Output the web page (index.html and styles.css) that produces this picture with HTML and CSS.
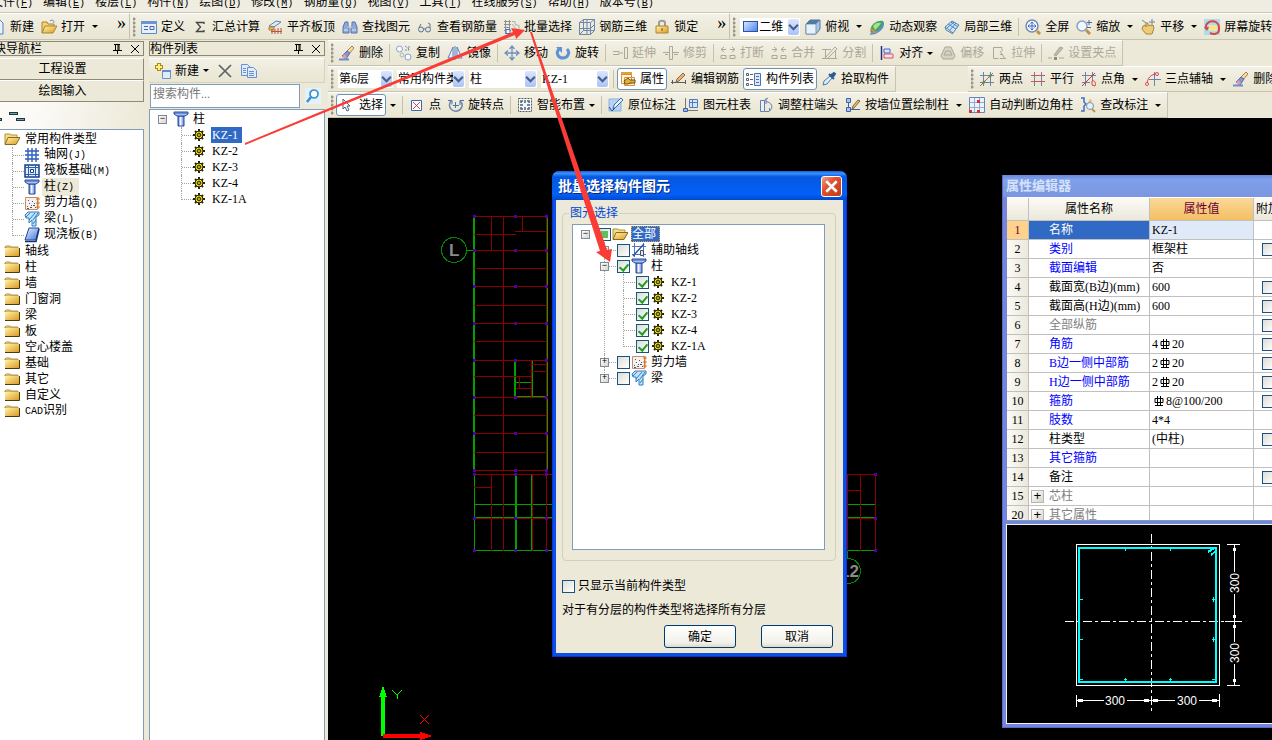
FILE: index.html
```
<!DOCTYPE html>
<html lang="zh-CN">
<head>
    <meta charset="UTF-8">
    <meta name="viewport" content="width=device-width, initial-scale=1.0">
    <title>批量选择构件图元</title>
    <link rel="stylesheet" href="styles.css">
</head>
<body>
    <!-- icon sprite -->
    <svg class="sprite" aria-hidden="true">
        <defs>
            <linearGradient id="gold" x1="0" y1="0" x2="1" y2="1"><stop offset="0" stop-color="#fff3b0"/><stop offset="1" stop-color="#dc9a1c"/></linearGradient>
            <linearGradient id="blue" x1="0" y1="0" x2="1" y2="1"><stop offset="0" stop-color="#eaf2ff"/><stop offset="1" stop-color="#3d76d8"/></linearGradient>
            <linearGradient id="steel" x1="0" y1="0" x2="1" y2="0"><stop offset="0" stop-color="#3c62c8"/><stop offset=".4" stop-color="#f4f8ff"/><stop offset="1" stop-color="#5a82dc"/></linearGradient>
        </defs>
        <symbol id="page" viewBox="0 0 16 16"><path d="M3 1h7l3 3v11H3z" fill="#e8f0fc" stroke="#5b7fc0"/></symbol>
        <symbol id="open" viewBox="0 0 16 16"><path d="M1 14V3h5l1 2h6v3" fill="#f3d372" stroke="#a88530"/><path d="M1 14l3-7h12l-4 7z" fill="url(#gold)" stroke="#a88530"/><path d="M9 2c3-2 4 0 4 2" fill="none" stroke="#5a86c8"/></symbol>
        <symbol id="folder" viewBox="0 0 16 16"><path d="M1 4l1-1h4l1 1h7v1H1z" fill="#f8dc82" stroke="#b5913a"/><path d="M1 5h14v8H1z" fill="url(#gold)"/><path d="M1 13.5h14.500V5" fill="none" stroke="#4a3a10"/></symbol>
        <symbol id="folder-open" viewBox="0 0 16 16"><path d="M1 13V3h5l1 1h6v3" fill="#f8dc82" stroke="#b5913a"/><path d="M1 13.500l3-7h12l-4 7z" fill="url(#gold)" stroke="#8a6a20"/></symbol>
        <symbol id="form" viewBox="0 0 16 16"><path d="M0 2.500h15.500v12H.500z" fill="#e6effc" stroke="#5f86c6"/><path d="M0 2h16v3H0z" fill="#6b93d6"/><path d="M3 7.500h4M3 10.500h4M9 7.500h4v3H9z" fill="none" stroke="#46689f"/></symbol>
        <symbol id="sum" viewBox="0 0 16 16"><path d="M12 5V3.500H4.500l4 4.500-4 4.500H12V11" fill="none" stroke="#444" stroke-width="1.300"/></symbol>
        <symbol id="level" viewBox="0 0 16 16"><path d="M2 7l7-5 5 1-7 5z" fill="#dce8fa" stroke="#5d7fb8"/><path d="M2 8h5v3H2z" fill="#e9bd60" stroke="#b08030"/><path d="M5 15v-5M8 15v-5M11 15V9M14 15V9M4 12.500h11" stroke="#c05040"/></symbol>
        <symbol id="find" viewBox="0 0 16 16"><path d="M3 3h3v3l1 2v6H1V8zM10 3h3l2 5v6H9V8l1-2z" fill="#8eabd8" stroke="#5674ac"/><path d="M6 8h4M2 11h4M10 11h4" stroke="#dce8fa"/></symbol>
        <symbol id="glasses" viewBox="0 0 16 16"><circle cx="4" cy="10.500" r="2.500" fill="#dce6ee" stroke="#65747e"/><circle cx="11" cy="10.500" r="2.500" fill="#dce6ee" stroke="#65747e"/><path d="M6 10h3M13 9V5l-2-1M2 9l2-4" fill="none" stroke="#65747e"/></symbol>
        <symbol id="batch" viewBox="0 0 16 16"><path d="M0 2.500h7M0 5.500h7M0 8.500h6M1.500 1v14M5.500 1v10M0 11.500h7" stroke="#8b9096" fill="none"/><path d="M8 2.500h3v3l4 1v8M8 5l6 7" fill="none" stroke="#a9adb2"/><path d="M2 10.500h4v4H2z" fill="#eef4ff" stroke="#3f70c8"/></symbol>
        <symbol id="grid3d" viewBox="0 0 16 16"><path d="M.500 3.500l4-3v11l-4 4zM4.500.500h11v11h-11M.500 3.500h11v12H.500M11.500 3.500l4-3M11.500 15.500l4-4M.500 9.500h11l4-4M8 1v14" fill="none" stroke="#6c87ae"/></symbol>
        <symbol id="lock" viewBox="0 0 16 16"><path d="M5 8V4c0-3 6-3 6 0v4" fill="none" stroke="#9c9c9c" stroke-width="2"/><path d="M2 7h12v7H2z" fill="url(#gold)" stroke="#b08434"/><path d="M8 9v3" stroke="#765018"/></symbol>
        <symbol id="cube" viewBox="0 0 16 16"><path d="M1 5l4-4h10v9l-4 5H1z" fill="#a9c6e4" stroke="#55789c"/><path d="M1 5h10v10H1z" fill="#e6f1fb" stroke="#7e9dbc"/><path d="M1 5l4-4h10l-4 4z" fill="#4f7ba5"/></symbol>
        <symbol id="orbit" viewBox="0 0 16 16"><path d="M2 14C-1 7 8 0 14 2c2 6-5 12-12 12z" fill="#49a35c"/><path d="M4 7c2-3 5-4 8-3l-2 3-4 4z" fill="#a7e095"/><path d="M1 15C7 16 16 9 14 3" fill="none" stroke="#5a8cdc" stroke-width="1.500"/><path d="M2 10l5 4" stroke="#e3864b" stroke-width="2"/></symbol>
        <symbol id="local3d" viewBox="0 0 16 16"><path d="M1 8l7-6 7 4-6 8z" fill="#cfe4f8" stroke="#4f86b8"/><path d="M4 5l8 5M7 3l7 5M3 9l7-6M6 11l6-7M1 8l1 3 7 4" fill="none" stroke="#4f86b8"/></symbol>
        <symbol id="full" viewBox="0 0 16 16"><circle cx="7" cy="7" r="6" fill="#eff6ff" stroke="#7889b0" stroke-width="1.500"/><path d="M7 3v8M3 7h8M5.500 4.500L7 3l1.500 1.500M5.500 9.500L7 11l1.500-1.500M4.500 5.500L3 7l1.500 1.500M9.500 5.500L11 7 9.500 8.500" fill="none" stroke="#3e69b4"/><path d="M12 12l3 3" stroke="#c69040" stroke-width="3"/></symbol>
        <symbol id="zoom" viewBox="0 0 16 16"><circle cx="6" cy="7" r="5" fill="#f1f7ff" stroke="#8ba0c2" stroke-width="1.500"/><path d="M10 11l4 4" stroke="#c69040" stroke-width="3"/><path d="M13 1v5M11 3.500h5M11 8.500h4" stroke="#4e6f9f"/></symbol>
        <symbol id="pan" viewBox="0 0 16 16"><path d="M3 7l2-1 1 2V4h2v3l2-1 2 1 1-1 1 3-2 6H6L2 10z" fill="#efcb77" stroke="#a88742"/><path d="M12 0v6M9 3h6M2 1l4 3" stroke="#72829b"/></symbol>
        <symbol id="spin" viewBox="0 0 16 16"><path d="M0 0h16v16H0z" fill="#aedbef"/><path d="M5 6h8v6H5z" fill="#f8e48c"/><path d="M2 10c-2-9 12-11 13-2s-7 7-9 6" fill="none" stroke="#da4545" stroke-width="2"/><path d="M0 8l3 4 2-4z" fill="#da4545"/></symbol>
        <symbol id="erase" viewBox="0 0 16 16"><path d="M13 1l2 2-5 6-3-2z" fill="#f7dc9c" stroke="#a28250"/><path d="M8 6l3 2-4 6-4-3z" fill="#8497d4" stroke="#5b6bab"/><path d="M5 9l3 3-2 2-3-2z" fill="#e69ca6"/><path d="M0 14.500h10" stroke="#6c8fcf" stroke-width="2"/></symbol>
        <symbol id="copy" viewBox="0 0 16 16"><circle cx="3.500" cy="4" r="3" fill="#f7fbff" stroke="#85a4c8"/><circle cx="12" cy="12" r="3" fill="#f7fbff" stroke="#85a4c8"/><circle cx="6" cy="10" r="2" fill="none" stroke="#b4b4c4"/><path d="M9 1l4 3M13 1v4h-4" fill="none" stroke="#668bc4" stroke-dasharray="2 1"/></symbol>
        <symbol id="mirror" viewBox="0 0 16 16"><path d="M6 2v11H1zM10 2v11h5z" fill="#eaf2ff" stroke="#5682c3"/><path d="M8 1v14" stroke="#5682c3"/></symbol>
        <symbol id="move" viewBox="0 0 16 16"><path d="M8 1v14M1 8h14M5.500 4L8 1l2.500 3M5.500 12L8 15l2.500-3M4 5.500L1 8l3 2.500M12 5.500L15 8l-3 2.500" fill="none" stroke="#6f90bf" stroke-width="1.300"/></symbol>
        <symbol id="rotate" viewBox="0 0 16 16"><path d="M4 4c-4 5 0 9 4 9s8-5 4-9" fill="none" stroke="#5f91d8" stroke-width="3"/><path d="M1 2h6v6z" fill="#5f91d8"/></symbol>
        <symbol id="extend" viewBox="0 0 16 16"><path d="M1 6.500h6v3H1M8 8h3M12.500 2.500h3v11h-3z" fill="none" stroke="currentColor"/></symbol>
        <symbol id="trim" viewBox="0 0 16 16"><path d="M0 7.500h6M10 7.500h6M6.500 1.500h3v13h-3zM2 9.500h3M11 9.500h4" fill="none" stroke="currentColor"/></symbol>
        <symbol id="break" viewBox="0 0 16 16"><path d="M1 4.500h5M10 4.500h5M4 2L1 4.500 4 7M12 2l3 2.500L12 7M1 10.500h5v3H1zM15 10.500h-5v3h5z" fill="none" stroke="currentColor"/></symbol>
        <symbol id="merge" viewBox="0 0 16 16"><path d="M1 4.500h5M10 4.500h5M3 2l3 2.500L3 7M13 2l-3 2.500L13 7M1 10.500h5v3H1zM15 10.500h-5v3h5z" fill="none" stroke="currentColor"/></symbol>
        <symbol id="split" viewBox="0 0 16 16"><path d="M0 4.500h9M0 13.500h15M3.500 4v9M13.500 6v7M3 13L13 2l2 2-9 9" fill="none" stroke="currentColor"/></symbol>
        <symbol id="align" viewBox="0 0 16 16"><path d="M2.500 1v14" stroke="#222f7c" stroke-width="1.500"/><path d="M5 4h6v4H5z" fill="#d9e5ff" stroke="#4363d8"/><path d="M5 9h9v4H5z" fill="#f8e4e6" stroke="#d15260"/></symbol>
        <symbol id="offset" viewBox="0 0 16 16"><path d="M5 2h6l4 9-2 3H3l-2-3z" fill="#d5d2c4" stroke="currentColor"/><path d="M6 6h4l2 4H4z" fill="none" stroke="currentColor"/></symbol>
        <symbol id="stretch" viewBox="0 0 16 16"><path d="M7 2.500H2.500v11h5M7 2.500h4v4M9 6l5 8M9 9.500h3M9 13.500h6" fill="none" stroke="currentColor"/></symbol>
        <symbol id="grip" viewBox="0 0 16 16"><path d="M6 10l6-8 3 1-7 8z" fill="#bdbaad" stroke="currentColor"/><path d="M0 13h4M11 13h5" stroke="currentColor"/><path d="M6 12h3v3H6z" fill="#8e8c80"/></symbol>
        <symbol id="prop" viewBox="0 0 16 16"><path d="M1 1h11v3H1z" fill="#e99c3a"/><path d="M1.500 3.500h10v9h-10zM4.500 6.500h10v8h-10z" fill="#fff6dc" stroke="#d88e35"/><path d="M4 10l4-3 2 2h5v3h-5l-2 1H5z" fill="#e5af38" stroke="#6b5020"/></symbol>
        <symbol id="rebar" viewBox="0 0 16 16"><path d="M0 11.500h15M1.500 9v4M14.500 9v4" stroke="#5b5d5b" fill="none"/><path d="M5 11l1-3 6-6 2 2-6 6z" fill="#eab26a" stroke="#8e6a44"/></symbol>
        <symbol id="list" viewBox="0 0 16 16"><path d="M8.500 2.500h6v12h-6z" fill="#dfe9fb" stroke="#4673b8"/><path d="M10 5.500h3M10 8.500h3M10 11.500h3" stroke="#4673b8"/><path d="M.500 2.500h2v2h-2zM.500 7.500h2v2h-2zM.500 12.500h2v2h-2zM4 3.500h3M4 8.500h3M4 13.500h3" fill="none" stroke="#555f6f"/></symbol>
        <symbol id="pick" viewBox="0 0 16 16"><path d="M2 14l1-4 6-5 2 2-5 6z" fill="#dbebfb" stroke="#4c7dae"/><path d="M8 3l5 5M10 4l3-2 1 1-2 3z" fill="#2f5c99" stroke="#2f5c99" stroke-width="2"/></symbol>
        <symbol id="twopt" viewBox="0 0 16 16"><path d="M1 4.500h14M1 11.500h14M4.500 1v14M11.500 1v14" stroke="#6d81af"/><path d="M1 15L14 2" stroke="#c55"/><circle cx="5" cy="11" r="1.500" fill="#4c9c4a"/><circle cx="11" cy="5" r="1.500" fill="#4c9c4a"/></symbol>
        <symbol id="parallel" viewBox="0 0 16 16"><path d="M4.500 1v14M11.500 1v14" stroke="#6d81af"/><path d="M1 4.500h14M1 10.500h14" stroke="#c55"/></symbol>
        <symbol id="angle" viewBox="0 0 16 16"><path d="M1 4.500h14M4.500 1v14M11.500 1v9M1 11.500h8" stroke="#6d81af"/><path d="M1 15L14 2" stroke="#c33"/><path d="M11 10c3-1 4 2 3 5l-3-1z" fill="none" stroke="#d44"/></symbol>
        <symbol id="threept" viewBox="0 0 16 16"><path d="M4 8.500h12M9.500 1v14" stroke="#6d81af"/><path d="M2 14C2 7 6 3 12 3" fill="none" stroke="#d44"/><circle cx="2" cy="13" r="1.500" fill="#fff" stroke="#d44"/><circle cx="12" cy="3" r="1.500" fill="#fff" stroke="#d44"/></symbol>
        <symbol id="cursor" viewBox="0 0 16 16"><path d="M4 2v10l2-2 2 4 2-1-2-4h3z" fill="#fff" stroke="#4d5f80"/></symbol>
        <symbol id="point" viewBox="0 0 16 16"><path d="M2.500 3.500h10v10h-10z" fill="#fff" stroke="#4366a8"/><path d="M4 5l7 7M11 5l-7 7" stroke="#d04850"/></symbol>
        <symbol id="rotpt" viewBox="0 0 16 16"><path d="M3 4c-4 6 1 11 6 10 5-1 7-7 3-10" fill="none" stroke="#6d87a8" stroke-width="1.500"/><path d="M7.500 5v6M5 8.500h6M0 3.500h4v4M12 8V3.500h4" fill="none" stroke="#4c72a8"/></symbol>
        <symbol id="smart" viewBox="0 0 16 16"><path d="M1.500 1.500h13v13h-13z" fill="#f8f8f0" stroke="#555" stroke-dasharray="2 1"/><path d="M8 3v3M8 10v3M3 8h3M10 8h3M4 6V4h2M12 6V4h-2M4 10v2h2M12 10v2h-2" fill="none" stroke="#43618c" stroke-width="1.500"/></symbol>
        <symbol id="annot" viewBox="0 0 16 16"><path d="M1 2h12v12H1z" fill="#b7d2f2" stroke="#8db1dd"/><path d="M5 12l1-4 7-7 2 2-7 7z" fill="#eaf4ff" stroke="#356db4"/><path d="M1 10l3 4 3-3" fill="none" stroke="#274c88"/></symbol>
        <symbol id="coltab" viewBox="0 0 16 16"><path d="M2.500 1v14M1 13.500h14" stroke="#777"/><path d="M6.500 2.500h8v8h-8z" fill="#d5e6ff" stroke="#5679b8"/><path d="M6 5.500h9M9.500 2v8" stroke="#5679b8"/><path d="M.500 11.500h4v3h-4z" fill="#9cb7e6" stroke="#4062a8"/></symbol>
        <symbol id="adjust" viewBox="0 0 16 16"><path d="M2.500 3.500h4v11h-4z" fill="#e8effb" stroke="#667fae"/><path d="M7 14.500h4c5-4 3-9-3-10M8 1v6M6 4l4-3M11.500 14v-3" fill="none" stroke="#667fae"/></symbol>
        <symbol id="wallcol" viewBox="0 0 16 16"><path d="M1.500 1.500h4v4h-4zM1.500 10.500h4v4h-4zM3.500 6v5M6 12.500h9" fill="#aac3ef" stroke="#3d61ac"/><path d="M7 12l1-3 5-6 2 1-6 7z" fill="#f2c15e" stroke="#7b6740"/></symbol>
        <symbol id="corner" viewBox="0 0 16 16"><path d="M.500.500h15v15H.500z" fill="#edf3fd" stroke="#6787ba"/><path d="M1 5.500h14M1 10.500h14M5.500 1v14M10.500 1v14" stroke="#94aad0"/><path d="M8 3h3v3H8zM0 13h3v3H0zM8 13h3v3H8z" fill="#d83038"/></symbol>
        <symbol id="check" viewBox="0 0 16 16"><path d="M1 1h3v4l2 2-2 2v5H1" fill="none" stroke="#3a70c8" stroke-width="1.500"/><path d="M6 9l4-7 2 1-3 6z" fill="#ebba68"/><circle cx="10" cy="9" r="3.500" fill="#e5f1ff" stroke="#7b91b0"/><path d="M12 12l3 3" stroke="#c69040" stroke-width="2"/></symbol>
        <symbol id="new" viewBox="0 0 16 16"><path d="M4 0v8M0 4h8" stroke="#a88b18" stroke-width="4"/><path d="M4 1v6M1 4h6" stroke="#fff17c" stroke-width="2"/><path d="M7.500 7.500h8v8h-8z" fill="#dfeafb" stroke="#7090c0"/><path d="M7 7h9v2H7z" fill="#5e8bd5"/></symbol>
        <symbol id="cross" viewBox="0 0 16 16"><path d="M2 2l12 12M14 2L2 14" stroke="#5d6268" stroke-width="1.700"/></symbol>
        <symbol id="pages" viewBox="0 0 16 16"><path d="M.500 1.500h6l3 3v8h-9z" fill="#deebfb" stroke="#6790cc"/><path d="M6.500 4.500h6l3 3v7h-9z" fill="#deebfb" stroke="#6790cc"/><path d="M8 8.500h5M8 10.500h5M8 12.500h5M2 5.500h3M2 7.500h3M2 9.500h3" stroke="#6790cc"/></symbol>
        <symbol id="search" viewBox="0 0 16 16"><path d="M0 0h16v16H0z" fill="#e2f1fb"/><circle cx="9" cy="6" r="4" fill="#fff" stroke="#3a8fd0" stroke-width="1.700"/><path d="M6 9l-4 5" stroke="#3a8fd0" stroke-width="2.500"/></symbol>
        <symbol id="pin" viewBox="0 0 16 16"><path d="M5 3.500h6M6.500 3v6M10 3v6M9 3v6M4 9.500h9M8.500 9v4" fill="none" stroke="#000"/></symbol>
        <symbol id="close" viewBox="0 0 16 16"><path d="M4 4l8 8M12 4l-8 8" stroke="currentColor"/></symbol>
        <symbol id="axis" viewBox="0 0 16 16"><path d="M1 4h14M1 8h14M1 12h14M4 1v14M8 1v14M12 1v14" stroke="#2d5ec0" stroke-width="1.400"/></symbol>
        <symbol id="raft" viewBox="0 0 16 16"><path d="M1 2h14v12H1z" fill="#e1ecfc" stroke="#123f8c" stroke-width="1.500"/><path d="M1 4.500h14M1 11.500h14M4.500 2v12M11.500 2v12" stroke="#2d5ca8"/><path d="M6.500 6.500h3v3h-3z" fill="#fff" stroke="#123f8c"/></symbol>
        <symbol id="column" viewBox="0 0 16 16"><path d="M5 5h6v10H5z" fill="url(#steel)" stroke="#284894"/><path d="M1 1h14v2l-3 2H4L1 3z" fill="#a8c3f6" stroke="#284894"/><path d="M1 2h14" stroke="#3158b8"/></symbol>
        <symbol id="wall" viewBox="0 0 16 16"><path d="M1.500 2.500h12v12h-12z" fill="#f4f2f0" stroke="#c88a6a"/><path d="M3 11.500h1M5 8.500h1M6 12.500h2M8 6.500h1M9 10.500h2M11 12.500h1M4 5.500h1M3 13.500h2M7 10.500h1M10 8.500h1" stroke="#555"/><path d="M14 2v12M12 4h4M12 8h4M12 12h4" stroke="#d8761c"/></symbol>
        <symbol id="beam" viewBox="0 0 16 16"><path d="M1 4l3-3h11v3l-3 2v9H8V9l-3 3V7H2z" fill="#c3e2fb" stroke="#2f7fc0"/><path d="M2 6l4-4M5 9l6-7M9 9l5-7M9 13l3-4" stroke="#2f7fc0"/></symbol>
        <symbol id="slab" viewBox="0 0 16 16"><path d="M5 1h10l-3 12H1z" fill="url(#blue)" stroke="#21499c"/><path d="M1 14.500h11L15 2" fill="none" stroke="#17336c" stroke-width="1.500"/></symbol>
        <symbol id="aux" viewBox="0 0 16 16"><path d="M3.500 1v14M12.500 1v14M1 4.500h14M1 12.500h14" stroke="#4f78c0"/><path d="M2 14L13 2" stroke="#2c57a8" stroke-width="1.500"/><path d="M9.500 8.500h3v5h-3z" fill="#dfe6f0" stroke="#444f64"/></symbol>
        <symbol id="gear" viewBox="0 0 12 12"><path d="M6 0v12M0 6h12M2 2l8 8M10 2l-8 8" stroke="#26240a" stroke-width="2"/><circle cx="6" cy="6" r="4" fill="#f4ec18" stroke="#26240a"/><path d="M6 2v8M2 6h8M3 3l6 6M9 3L3 9" stroke="#26240a" stroke-width=".5"/><circle cx="6" cy="6" r="1.500" fill="#f4ec18" stroke="#26240a"/></symbol>
        <symbol id="bar3" viewBox="0 0 12 12"><path d="M2 3.500h8v4H2zM4.500 1v9M7.500 1v9M2 10.500h8" fill="none" stroke="#000"/></symbol>
        <symbol id="down" viewBox="0 0 10 8"><path d="M1 2l4 4 4-4" fill="none" stroke="#47608c" stroke-width="2"/></symbol>
    </svg>

    <nav class="menubar">
        <a href="#">文件<span class="key">(<u>F</u>)</span></a>
        <a href="#">编辑<span class="key">(<u>E</u>)</span></a>
        <a href="#">楼层<span class="key">(<u>L</u>)</span></a>
        <a href="#">构件<span class="key">(<u>N</u>)</span></a>
        <a href="#">绘图<span class="key">(<u>D</u>)</span></a>
        <a href="#">修改<span class="key">(<u>M</u>)</span></a>
        <a href="#">钢筋量<span class="key">(<u>Q</u>)</span></a>
        <a href="#">视图<span class="key">(<u>V</u>)</span></a>
        <a href="#">工具<span class="key">(<u>T</u>)</span></a>
        <a href="#">在线服务<span class="key">(<u>S</u>)</span></a>
        <a href="#">帮助<span class="key">(<u>H</u>)</span></a>
        <a href="#">版本号<span class="key">(<u>B</u>)</span></a>
    </nav>

    <div class="toolrow main-row">
        <div class="toolbar first">
            <button><svg><use href="#page"/></svg>新建</button>
            <button><svg><use href="#open"/></svg>打开<i class="caret"></i></button>
            <span class="more">»</span>
        </div>
        <div class="toolbar">
            <span class="handle"></span>
            <button><svg><use href="#form"/></svg>定义</button>
            <button><svg><use href="#sum"/></svg>汇总计算</button>
            <button><svg><use href="#level"/></svg>平齐板顶</button>
            <button><svg><use href="#find"/></svg>查找图元</button>
            <button><svg><use href="#glasses"/></svg>查看钢筋量</button>
            <button><svg><use href="#batch"/></svg>批量选择</button>
            <button><svg><use href="#grid3d"/></svg>钢筋三维</button>
            <button><svg><use href="#lock"/></svg>锁定</button>
            <span class="more">»</span>
        </div>
        <div class="toolbar">
            <span class="handle"></span>
            <span class="combo view"><i class="swatch"></i><select aria-label="视图模式"><option>二维</option></select><svg><use href="#down"/></svg></span>
            <button><svg><use href="#cube"/></svg>俯视<i class="caret"></i></button>
            <button><svg><use href="#orbit"/></svg>动态观察</button>
            <button><svg><use href="#local3d"/></svg>局部三维</button>
            <span class="sep"></span>
            <button><svg><use href="#full"/></svg>全屏</button>
            <button><svg><use href="#zoom"/></svg>缩放<i class="caret"></i></button>
            <button><svg><use href="#pan"/></svg>平移<i class="caret"></i></button>
            <button><svg><use href="#spin"/></svg>屏幕旋转</button>
        </div>
    </div>

    <div class="main">
        <aside class="nav-panel">
            <h2 class="panel-title">模块导航栏<svg><use href="#pin"/></svg><svg><use href="#close"/></svg></h2>
            <button class="nav-button">工程设置</button>
            <button class="nav-button">绘图输入</button>
            <div class="nav-strip"><i></i><i></i><i></i></div>
            <ul class="tree nav-tree">
                <li><div class="row"><svg><use href="#folder-open"/></svg><span>常用构件类型</span></div>
                    <ul>
                        <li><div class="row"><svg><use href="#axis"/></svg><span>轴网<span class="key">(J)</span></span></div></li>
                        <li><div class="row"><svg><use href="#raft"/></svg><span>筏板基础<span class="key">(M)</span></span></div></li>
                        <li><div class="row"><svg><use href="#column"/></svg><span class="current">柱<span class="key">(Z)</span></span></div></li>
                        <li><div class="row"><svg><use href="#wall"/></svg><span>剪力墙<span class="key">(Q)</span></span></div></li>
                        <li><div class="row"><svg><use href="#beam"/></svg><span>梁<span class="key">(L)</span></span></div></li>
                        <li><div class="row"><svg><use href="#slab"/></svg><span>现浇板<span class="key">(B)</span></span></div></li>
                    </ul>
                </li>
                <li><div class="row"><svg><use href="#folder"/></svg><span>轴线</span></div></li>
                <li><div class="row"><svg><use href="#folder"/></svg><span>柱</span></div></li>
                <li><div class="row"><svg><use href="#folder"/></svg><span>墙</span></div></li>
                <li><div class="row"><svg><use href="#folder"/></svg><span>门窗洞</span></div></li>
                <li><div class="row"><svg><use href="#folder"/></svg><span>梁</span></div></li>
                <li><div class="row"><svg><use href="#folder"/></svg><span>板</span></div></li>
                <li><div class="row"><svg><use href="#folder"/></svg><span>空心楼盖</span></div></li>
                <li><div class="row"><svg><use href="#folder"/></svg><span>基础</span></div></li>
                <li><div class="row"><svg><use href="#folder"/></svg><span>其它</span></div></li>
                <li><div class="row"><svg><use href="#folder"/></svg><span>自定义</span></div></li>
                <li><div class="row"><svg><use href="#folder"/></svg><span><span class="key">CAD</span>识别</span></div></li>
            </ul>
        </aside>

        <aside class="list-panel">
            <h2 class="panel-title">构件列表<svg><use href="#pin"/></svg><svg><use href="#close"/></svg></h2>
            <div class="toolbar list-tools">
                <button><svg><use href="#new"/></svg>新建<i class="caret tight"></i></button>
                <button aria-label="删除"><svg><use href="#cross"/></svg></button>
                <button aria-label="复制"><svg><use href="#pages"/></svg></button>
            </div>
            <div class="search">
                <input type="text" placeholder="搜索构件..." aria-label="搜索构件">
                <button aria-label="搜索"><svg><use href="#search"/></svg></button>
            </div>
            <ul class="tree list-tree">
                <li><div class="row"><i class="toggle">−</i><svg><use href="#column"/></svg><span>柱</span></div>
                    <ul>
                        <li><div class="row"><svg class="gear"><use href="#gear"/></svg><span class="selected">KZ-1</span></div></li>
                        <li><div class="row"><svg class="gear"><use href="#gear"/></svg><span>KZ-2</span></div></li>
                        <li><div class="row"><svg class="gear"><use href="#gear"/></svg><span>KZ-3</span></div></li>
                        <li><div class="row"><svg class="gear"><use href="#gear"/></svg><span>KZ-4</span></div></li>
                        <li><div class="row"><svg class="gear"><use href="#gear"/></svg><span>KZ-1A</span></div></li>
                    </ul>
                </li>
            </ul>
        </aside>

        <section class="work">
            <div class="toolrow">
                <div class="toolbar">
                    <span class="handle"></span>
                    <button><svg><use href="#erase"/></svg>删除</button>
                    <span class="sep"></span>
                    <button><svg><use href="#copy"/></svg>复制</button>
                    <button><svg><use href="#mirror"/></svg>镜像</button>
                    <span class="sep"></span>
                    <button><svg><use href="#move"/></svg>移动</button>
                    <button><svg><use href="#rotate"/></svg>旋转</button>
                    <span class="sep"></span>
                    <button disabled><svg><use href="#extend"/></svg>延伸</button>
                    <button disabled><svg><use href="#trim"/></svg>修剪</button>
                    <span class="sep"></span>
                    <button disabled><svg><use href="#break"/></svg>打断</button>
                    <button disabled><svg><use href="#merge"/></svg>合并</button>
                    <button disabled><svg><use href="#split"/></svg>分割</button>
                    <span class="sep"></span>
                    <button><svg><use href="#align"/></svg>对齐<i class="caret tight"></i></button>
                    <button disabled><svg><use href="#offset"/></svg>偏移</button>
                    <button disabled><svg><use href="#stretch"/></svg>拉伸</button>
                    <span class="sep"></span>
                    <button disabled><svg><use href="#grip"/></svg>设置夹点</button>
                </div>
            </div>
            <div class="toolrow">
                <div class="toolbar">
                    <span class="handle"></span>
                    <span class="combo floor"><select aria-label="楼层"><option>第6层</option></select><svg><use href="#down"/></svg></span>
                    <span class="combo"><select aria-label="构件类别"><option>常用构件类型</option></select><svg><use href="#down"/></svg></span>
                    <span class="combo"><select aria-label="构件类型"><option>柱</option></select><svg><use href="#down"/></svg></span>
                    <span class="combo"><select aria-label="构件"><option>KZ-1</option></select><svg><use href="#down"/></svg></span>
                    <span class="sep"></span>
                    <button class="pressed"><svg><use href="#prop"/></svg>属性</button>
                    <button><svg><use href="#rebar"/></svg>编辑钢筋</button>
                    <button class="pressed"><svg><use href="#list"/></svg>构件列表</button>
                    <button><svg><use href="#pick"/></svg>拾取构件</button>
                </div>
                <div class="toolbar axis-tools">
                    <span class="handle"></span>
                    <button><svg><use href="#twopt"/></svg>两点</button>
                    <button><svg><use href="#parallel"/></svg>平行</button>
                    <button><svg><use href="#angle"/></svg>点角<i class="caret"></i></button>
                    <button><svg><use href="#threept"/></svg>三点辅轴<i class="caret"></i></button>
                    <button><svg><use href="#erase"/></svg>删除</button>
                </div>
            </div>
            <div class="toolrow">
                <div class="toolbar">
                    <span class="handle"></span>
                    <button class="pressed"><svg><use href="#cursor"/></svg>选择</button>
                    <button aria-label="选择方式"><i class="caret alone"></i></button>
                    <span class="sep"></span>
                    <button><svg><use href="#point"/></svg>点</button>
                    <button><svg><use href="#rotpt"/></svg>旋转点</button>
                    <span class="sep"></span>
                    <button><svg><use href="#smart"/></svg>智能布置<i class="caret tight"></i></button>
                    <span class="sep"></span>
                    <button><svg><use href="#annot"/></svg>原位标注</button>
                    <button><svg><use href="#coltab"/></svg>图元柱表</button>
                    <button><svg><use href="#adjust"/></svg>调整柱端头</button>
                    <button><svg><use href="#wallcol"/></svg>按墙位置绘制柱<i class="caret"></i></button>
                    <button><svg><use href="#corner"/></svg>自动判断边角柱</button>
                    <button><svg><use href="#check"/></svg>查改标注<i class="caret"></i></button>
                </div>
            </div>

            <div class="canvas">
                <svg class="plan" shape-rendering="crispEdges">
                    <g transform="translate(-328 -118)" fill="none">
                        <g stroke="#00a000">
                            <path stroke-width="2" d="M474 216V470M515 360V397M516 474V551"/>
                            <path d="M547.500 216V470M532.500 361V397M516 382.500H531M515 396.500H547M474.500 474V551M531.500 474V551M474 504.500H876M474 517.500H876M474 550.500H876M466 250.500H474"/>
                        </g>
                        <path stroke="#8a0000" d="M474 216.500H548M474 234.500H516M474 250.500H548M474 268.500H547M474 286.500H548M474 305.500H547M474 323.500H548M474 341.500H547M474 360.500H548M474 376.500H531M474 397.500H548M474 415.500H547M474 433.500H548M474 452.500H547M474 470.500H548M474 474.500H876M515 231.500H547M491.500 216V250M503.500 216V470M522.500 216V231M546.500 216V551M531.500 360V397M532 364.500H547M532 371.500H547M516 388.500H531M519.500 377V388M491.500 474V551M503.500 474V551M532.500 474V551M474 487.500H491M474 518.500H876M847.500 474V551M860.500 474V551M875.500 474V551M847 490.500H860"/>
                        <path stroke="#5000a0" stroke-width="3" stroke-dasharray="3 38 3 28 3 400" d="M473 216.500H549M473 250.500H549M473 286.500H549M473 323.500H549M473 360.500H549M473 397.500H549M473 433.500H549M473 470.500H549M473 474.500H549M473 518.500H549M473 550.500H549"/>
                        <path stroke="#5000a0" stroke-width="3" d="M874 474.500h3M874 518.500h3M874 550.500h3"/>
                        <g stroke="#00860a"><circle cx="454" cy="250" r="12.500"/><circle cx="848" cy="571" r="12.500"/><path d="M847.500 551v8"/></g>
                        <path d="M383 736V696" stroke="#0f0" stroke-width="4"/><path d="M383 686l4 11h-8z" fill="#0f0"/>
                        <path d="M383 736H422" stroke="#f00" stroke-width="4"/><path d="M432 736l-12-4v8z" fill="#f00"/>
                        <path d="M392 690l5 5 5-5M397 695v4" stroke="#0f0"/><path d="M420 715l9 9M429 715l-9 9" stroke="#f00" shape-rendering="auto"/>
                    </g>
                    <text x="121" y="138">L</text>
                    <text x="512" y="459">12</text>
                </svg>

                <form class="dialog">
                    <header><h1>批量选择构件图元</h1><button type="button" class="dialog-close" aria-label="关闭"><svg><use href="#close"/></svg></button></header>
                    <div class="dialog-body">
                        <fieldset>
                            <legend>图元选择</legend>
                            <ul class="tree pick-tree">
                                <li><label class="row"><i class="toggle">−</i><input type="checkbox" class="partial"><svg><use href="#folder-open"/></svg><span class="selected">全部</span></label>
                                    <ul>
                                        <li><label class="row"><i class="toggle">+</i><input type="checkbox"><svg><use href="#aux"/></svg><span>辅助轴线</span></label></li>
                                        <li><label class="row"><i class="toggle">−</i><input type="checkbox" checked><svg><use href="#column"/></svg><span>柱</span></label>
                                            <ul class="leaves">
                                                <li><label class="row"><input type="checkbox" checked><svg class="gear"><use href="#gear"/></svg><span>KZ-1</span></label></li>
                                                <li><label class="row"><input type="checkbox" checked><svg class="gear"><use href="#gear"/></svg><span>KZ-2</span></label></li>
                                                <li><label class="row"><input type="checkbox" checked><svg class="gear"><use href="#gear"/></svg><span>KZ-3</span></label></li>
                                                <li><label class="row"><input type="checkbox" checked><svg class="gear"><use href="#gear"/></svg><span>KZ-4</span></label></li>
                                                <li><label class="row"><input type="checkbox" checked><svg class="gear"><use href="#gear"/></svg><span>KZ-1A</span></label></li>
                                            </ul>
                                        </li>
                                        <li><label class="row"><i class="toggle">+</i><input type="checkbox"><svg><use href="#wall"/></svg><span>剪力墙</span></label></li>
                                        <li><label class="row"><i class="toggle">+</i><input type="checkbox"><svg><use href="#beam"/></svg><span>梁</span></label></li>
                                    </ul>
                                </li>
                            </ul>
                        </fieldset>
                        <label class="only"><input type="checkbox">只显示当前构件类型</label>
                        <p>对于有分层的构件类型将选择所有分层</p>
                        <div class="actions"><button type="button">确定</button><button type="button">取消</button></div>
                    </div>
                </form>

                <div class="props">
                    <h2>属性编辑器</h2>
                    <div class="props-table">
                        <table>
                            <thead><tr><th class="num"></th><th class="name">属性名称</th><th class="value">属性值</th><th class="extra">附加</th></tr></thead>
                            <tbody>
                                <tr class="active"><th>1</th><td>名称</td><td>KZ-1</td><td></td></tr>
                                <tr class="link"><th>2</th><td>类别</td><td>框架柱</td><td><input type="checkbox" aria-label="附加 类别"></td></tr>
                                <tr class="link"><th>3</th><td>截面编辑</td><td>否</td><td></td></tr>
                                <tr><th>4</th><td>截面宽(B边)(mm)</td><td>600</td><td><input type="checkbox" aria-label="附加 截面宽"></td></tr>
                                <tr><th>5</th><td>截面高(H边)(mm)</td><td>600</td><td><input type="checkbox" aria-label="附加 截面高"></td></tr>
                                <tr class="dim"><th>6</th><td>全部纵筋</td><td></td><td><input type="checkbox" aria-label="附加 全部纵筋"></td></tr>
                                <tr class="link"><th>7</th><td>角筋</td><td>4<svg><use href="#bar3"/></svg>20</td><td><input type="checkbox" aria-label="附加 角筋"></td></tr>
                                <tr class="link"><th>8</th><td>B边一侧中部筋</td><td>2<svg><use href="#bar3"/></svg>20</td><td><input type="checkbox" aria-label="附加 B边一侧中部筋"></td></tr>
                                <tr class="link"><th>9</th><td>H边一侧中部筋</td><td>2<svg><use href="#bar3"/></svg>20</td><td><input type="checkbox" aria-label="附加 H边一侧中部筋"></td></tr>
                                <tr class="link"><th>10</th><td>箍筋</td><td><svg><use href="#bar3"/></svg>8@100/200</td><td><input type="checkbox" aria-label="附加 箍筋"></td></tr>
                                <tr class="link"><th>11</th><td>肢数</td><td>4*4</td><td></td></tr>
                                <tr><th>12</th><td>柱类型</td><td>(中柱)</td><td><input type="checkbox" aria-label="附加 柱类型"></td></tr>
                                <tr class="link"><th>13</th><td>其它箍筋</td><td></td><td></td></tr>
                                <tr><th>14</th><td>备注</td><td></td><td><input type="checkbox" aria-label="附加 备注"></td></tr>
                                <tr class="dim group"><th>15</th><td><i class="toggle">+</i>芯柱</td><td></td><td></td></tr>
                                <tr class="dim group"><th>20</th><td><i class="toggle">+</i>其它属性</td><td></td><td></td></tr>
                            </tbody>
                        </table>
                    </div>
                    <svg class="section" shape-rendering="crispEdges">
                        <g transform="translate(-1007 -525)" fill="none" stroke="#fff">
                            <path d="M1076.500 544.500h143v141h-143zM1227 544.500h13M1227 685.500h13M1076.500 695v12M1219.500 694v13M1234.500 544v28M1234.500 594v48M1234.500 664v21M1076 700.500h28M1127 700.500h48M1199 700.500h20M1225 621.500h17"/>
                            <path stroke-dasharray="9 3 3 3" d="M1151.500 534V711M1065 621.500H1227"/>
                            <path stroke="#0ff" stroke-width="2" d="M1079 548h137v134h-137zM1208 552l6-4M1211 555l5-4"/>
                            <path stroke="#0ff" d="M1080 599.500h3M1080 639.500h3M1212 599.500h4M1212 639.500h4M1125.500 548v3M1170.500 548v3M1125.500 678v3M1124 679.500h3M1170.500 678v3M1169 679.500h3M1213.500 597v5M1213.500 637v5M1080 679.500h3M1212 679.500h3"/>
                            <path stroke-width="3" d="M1233 549.500h3M1233 616.500h3M1233 626.500h3M1233 680.500h3M1078 700.500h5M1144 700.500h5M1153 700.500h5M1212 700.500h5"/>
                        </g>
                        <text x="98" y="180">300</text>
                        <text x="170" y="180">300</text>
                        <text transform="translate(232 68) rotate(-90)">300</text>
                        <text transform="translate(232 138) rotate(-90)">300</text>
                    </svg>
                </div>
            </div>
        </section>
    </div>

    <!-- red pointers drawn over the whole window -->
    <svg class="pointers">
        <path d="M245 143L513 32l-2-4 14 2-9 9-1-4L245 145z"/>
        <path d="M530 32L600 251l-4 1 14 10 2-13-5 1L532 32z"/>
    </svg>
</body>
</html>
```
FILE: styles.css
```
* {
    box-sizing: border-box;
}
body {
    margin: 0;
    height: 100vh;
    display: flex;
    flex-direction: column;
    overflow: hidden;
    position: relative;
    background: #ece9d8;
    color: #000;
    font-family: "Liberation Serif", "Noto Sans CJK SC", serif;
    font-size: 12px;
    line-height: 16px;
}
button, input, select {
    font: inherit;
    color: inherit;
    margin: 0;
}
button {
    white-space: nowrap;
}
svg {
    width: 16px;
    height: 16px;
    flex: none;
}
ul {
    list-style: none;
    margin: 0;
    padding: 0;
}
.sprite {
    position: absolute;
    width: 0;
    height: 0;
}
.key {
    font-family: "Liberation Mono", monospace;
    font-size: 10px;
}

/* menu and toolbars */
.menubar {
    display: flex;
    align-items: flex-end;
    gap: 10px;
    height: 13px;
    flex: none;
    margin-left: -9px;
    overflow: hidden;
    background: #efede2;
    border-bottom: 1px solid #cac7b4;
}
.menubar a {
    flex: none;
    color: #000;
    text-decoration: none;
}
.toolrow {
    display: flex;
    flex: none;
    height: 26px;
    overflow: hidden;
}
.main-row {
    height: 27px;
}
.toolbar {
    display: flex;
    align-items: center;
    flex: none;
    gap: 1px;
    padding: 0 3px;
    background: linear-gradient(#f3f1e6, #ece9d8 60%, #e9e6d3);
    border-top: 1px solid #fff;
    border-bottom: 1px solid #c6c3b0;
    border-right: 1px solid #c6c3b0;
}
.toolbar.first {
    margin-left: -13px;
    padding-left: 0;
}
.toolbar button {
    display: flex;
    align-items: center;
    gap: 4px;
    height: 22px;
    padding: 0 2px;
    border: 1px solid transparent;
    background: none;
}
.toolbar button:disabled {
    color: #aca899;
}
.toolbar .pressed {
    background: #fff;
    border-color: #6f93b8;
    border-radius: 3px;
}
.handle {
    width: 4px;
    height: 20px;
    background: radial-gradient(circle at 1px 2px, #9a978a 1px, transparent 2px) 0 0 / 4px 4px;
}
.sep {
    width: 1px;
    height: 18px;
    margin: 0 2px;
    background: #c5c2b0;
}
.caret {
    margin-left: 3px;
    border: 3px solid transparent;
    border-top-color: #000;
    border-bottom: 0;
}
.caret.tight, .caret.alone {
    margin-left: 0;
}
.more {
    margin: -8px 0 0 15px;
    font-size: 18px;
}
.combo {
    position: relative;
    display: flex;
    align-items: center;
    width: 68px;
    height: 18px;
    margin: 0 1px 0 2px;
    background: #fff;
}
.combo.floor {
    width: 55px;
}
.combo.view {
    width: 60px;
}
.combo select {
    appearance: none;
    flex: 1;
    min-width: 0;
    height: 18px;
    padding: 0 12px 0 1px;
    border: 0;
    background: none;
}
.combo svg {
    position: absolute;
    right: 1px;
    top: 1px;
    width: 11px;
    height: 16px;
    background: linear-gradient(#dbe5fc, #aac3f5);
    border-radius: 2px;
    pointer-events: none;
}
.swatch {
    width: 15px;
    height: 11px;
    margin-left: 3px;
    background: linear-gradient(135deg, #d6e6ff, #4d86e8);
    border: 1px solid #2c52a8;
}
.axis-tools {
    margin-left: 72px;
    padding-right: 40px;
}

/* docked panels */
.main {
    display: flex;
    flex: 1;
    min-height: 0;
}
.nav-panel, .list-panel {
    display: flex;
    flex-direction: column;
    flex: none;
}
.nav-panel {
    width: 163px;
    margin: 1px 5px 0 -19px;
}
.list-panel {
    width: 176px;
    margin: 1px 3px 0 0;
}
.panel-title {
    display: flex;
    align-items: center;
    height: 15px;
    margin: 0 0 2px;
    border: 1px solid #8b8878;
    font-size: 12px;
    font-weight: normal;
}
.panel-title svg:first-of-type {
    margin-left: auto;
    margin-right: 2px;
}
.nav-button {
    height: 22px;
    padding: 0;
    border: 1px solid #fff;
    border-right-color: #8d8a7a;
    border-bottom-color: #8d8a7a;
    background: #ece9d8;
}
.nav-strip {
    height: 27px;
    padding: 10px 0 0 14px;
    background: linear-gradient(100deg, #fcfbf8 30%, #ece9d8);
}
.nav-strip i {
    display: block;
    width: 9px;
    height: 3px;
    border: 1px solid #234;
    background: #6aa9a4;
}
.nav-strip i:first-child {
    margin-left: 14px;
}
.nav-strip i:nth-child(2) {
    margin: 3px 0 0 21px;
}
.nav-strip i:nth-child(3) {
    margin: -3px 0 0 -2px;
}
.list-tools {
    height: 25px;
    border-color: #fff #d5d2c0 #d5d2c0;
}
.list-tools button {
    margin-right: 1px;
}
.search {
    display: flex;
    align-items: center;
    height: 26px;
    padding: 0 4px 0 1px;
}
.search input {
    flex: 1;
    min-width: 0;
    height: 24px;
    padding: 0 2px 4px;
    border: 1px solid #7f9db9;
    background: #fff;
}
.search input::placeholder {
    color: #777;
}
.search button {
    display: flex;
    margin-left: 5px;
    padding: 0;
    border: 0;
    background: none;
}

/* trees */
.tree {
    flex: 1;
    background: #fff;
    border: 1px solid #7f9db9;
}
.row {
    display: flex;
    align-items: center;
    height: 16px;
    white-space: nowrap;
}
.tree li li {
    position: relative;
}
.tree li li::before {
    content: "";
    position: absolute;
    top: 0;
    left: -12px;
    width: 12px;
    height: 100%;
    border-left: 1px dotted #a5a296;
    background: linear-gradient(90deg, #a5a296 50%, transparent 50%) 0 8px / 2px 1px repeat-x;
}
.tree li li:last-child::before {
    height: 9px;
}
.tree .gear {
    width: 12px;
    height: 12px;
}
.selected {
    padding: 0 5px 0 1px;
    background: #316ac5;
    color: #fff;
}
.nav-tree {
    border-bottom: 0;
    padding: 1px 0 0 22px;
}
.nav-tree .row > span {
    padding: 0 5px 0 2px;
    margin-left: 3px;
}
.nav-tree ul {
    padding-left: 20px;
}
.nav-tree ul .row > span {
    margin-left: 2px;
}
.nav-tree .current {
    background: #ece9d8;
}
.list-tree {
    border-bottom: 0;
    padding: 1px 0 0 8px;
}
.list-tree ul {
    padding-left: 35px;
}
.list-tree .row span {
    margin-left: 4px;
}
.list-tree li li .row span {
    padding: 0 4px 0 1px;
    margin-left: 6px;
}
.toggle {
    width: 9px;
    height: 9px;
    flex: none;
    border: 1px solid #7b8b9c;
    background: linear-gradient(135deg, #fff, #d8d5c8);
    color: #000;
    font: 9px/7px "Liberation Mono", monospace;
    text-align: center;
}
.list-tree .toggle {
    margin-right: 6px;
}

/* drawing area */
.work {
    display: flex;
    flex-direction: column;
    flex: 1;
    min-width: 0;
}
.canvas {
    position: relative;
    flex: 1;
    overflow: hidden;
    background: #000;
}
.plan {
    position: absolute;
    inset: 0;
    width: 100%;
    height: 100%;
}
.plan text {
    fill: #8a8a8a;
    font: bold 17px "Liberation Sans", sans-serif;
}
input[type="checkbox"] {
    appearance: none;
    width: 13px;
    height: 13px;
    flex: none;
    border: 1px solid #1c5180;
    background: linear-gradient(135deg, #dcdcd7, #fff);
}
input[type="checkbox"]:checked::before {
    content: "";
    display: block;
    width: 4px;
    height: 7px;
    margin: 1px 0 0 3px;
    border: solid #21a121;
    border-width: 0 2px 2px 0;
    transform: rotate(40deg);
}
input.partial::before {
    content: "";
    display: block;
    width: 7px;
    height: 7px;
    margin: 2px;
    background: #5fc05f;
}

/* selection dialog */
.dialog {
    position: absolute;
    left: 224px;
    top: 53px;
    width: 295px;
    padding: 0 3px 3px;
    background: #0a4fe8;
    border: 1px solid #0831d9;
    border-width: 0 1px 1px;
    border-radius: 7px 7px 0 0;
}
.dialog header {
    display: flex;
    align-items: center;
    justify-content: space-between;
    height: 29px;
    margin: 0 -4px;
    padding: 2px 5px 0 6px;
    background: linear-gradient(#0a5be0, #3b92ff 8%, #0558e0 20%, #0260f8 80%, #0148cc);
    border-radius: 7px 7px 0 0;
}
.dialog h1 {
    margin: 0;
    color: #fff;
    font-size: 14px;
    text-shadow: 1px 1px #0a2a80;
}
.dialog-close {
    display: flex;
    align-items: center;
    justify-content: center;
    width: 21px;
    height: 21px;
    padding: 0;
    border: 1px solid #fff;
    border-radius: 3px;
    background: linear-gradient(135deg, #f0a088, #e0502c 40%, #c03a18);
    color: #fff;
}
.dialog-close svg {
    width: 21px;
    height: 21px;
    stroke-width: 2px;
}
.dialog-body {
    padding: 5px 7px 5px 6px;
    background: #ece9d8;
}
fieldset {
    min-width: 0;
    margin: 0 0 17px;
    padding: 3px 10px 10px 9px;
    border: 1px solid #d0d0bf;
    border-radius: 4px;
}
legend {
    margin-left: -3px;
    padding: 0 1px;
    color: #0046d5;
}
.pick-tree {
    height: 326px;
    padding: 1px 0 0 8px;
}
.pick-tree ul {
    padding-left: 19px;
}
.pick-tree .leaves {
    padding-left: 36px;
}
.pick-tree .toggle {
    position: relative;
    margin-right: 8px;
}
.pick-tree .row svg {
    margin: 0 4px 0 1px;
}
.pick-tree .row .gear {
    margin: 0 7px 0 3px;
}
.pick-tree li li::before {
    left: 4px;
}
.pick-tree .leaves li::before {
    left: -13px;
}
.pick-tree .selected {
    padding: 0 4px 0 1px;
    margin-left: -1px;
    outline: 1px dotted #e0a040;
    outline-offset: -1px;
}
.only {
    display: flex;
    align-items: center;
    gap: 3px;
}
.dialog p {
    margin: 8px 0 7px;
}
.actions {
    display: flex;
    justify-content: flex-end;
    gap: 25px;
    padding-right: 3px;
}
.actions button {
    width: 72px;
    height: 23px;
    padding: 0;
    border: 1px solid #003c74;
    border-radius: 3px;
    background: linear-gradient(#fff, #f2f1ea 80%, #dcd8cc);
}

/* property editor */
.props {
    position: absolute;
    left: 674px;
    top: 57px;
    width: 300px;
    padding: 0 4px 4px;
    background: #7585dc;
    border: 1px solid #5a68c8;
    border-width: 0 1px 1px;
}
.props h2 {
    height: 22px;
    margin: 0 -4px;
    padding: 3px 3px 0;
    background: linear-gradient(#6a88dc, #7fa0ea 20%, #7b96e0);
    color: #d5e2fa;
    font-size: 13px;
}
.props-table {
    height: 324px;
    overflow: hidden;
    background: #fff;
    border-bottom: 1px solid #7f9db9;
    border-top: 1px solid #fff;
}
table {
    width: 100%;
    table-layout: fixed;
    border-collapse: separate;
    border-spacing: 0;
}
th, td {
    height: 19px;
    padding: 0 0 0 2px;
    border-right: 1px solid #c0c0c0;
    border-bottom: 1px solid #c0c0c0;
    line-height: 16px;
    text-align: left;
    white-space: nowrap;
    overflow: hidden;
}
th {
    padding: 0;
    background: linear-gradient(90deg, #fbfaf6, #ebe8da);
    font-weight: normal;
    text-align: center;
}
thead th {
    height: 23px;
    background: linear-gradient(#fbfaf6, #ebe8da);
}
.num {
    width: 22px;
}
.name {
    width: 121px;
}
.value {
    width: 104px;
    background: linear-gradient(#fbd898, #f3bf62);
    color: #6b0038;
}
.extra {
    padding-left: 2px;
    text-align: left;
}
td:nth-child(2) {
    padding-left: 20px;
}
td:last-child {
    padding: 0 0 0 8px;
}
td input {
    display: block;
}
td svg {
    width: 12px;
    height: 12px;
    margin: 0 1px;
    vertical-align: -2px;
}
.link td:nth-child(2) {
    color: #00f;
}
.dim td {
    color: #808080;
}
.active th {
    background: #ffd28c;
    color: #6b0038;
}
.active td:nth-child(2) {
    background: #316ac5;
    color: #fff;
}
.active td:nth-child(3) {
    background: #dfe9f7;
}
.group td:nth-child(2) {
    padding-left: 2px;
}
.group .toggle {
    float: left;
    width: 13px;
    height: 13px;
    margin: 2px 5px 0 0;
    border-color: #b5b5b5;
    font-size: 13px;
    line-height: 11px;
}
.section {
    display: block;
    width: 100%;
    height: 198px;
    margin-top: 4px;
    background: #000;
    outline: 1px solid #f4f1e6;
}
.section text {
    fill: #fff;
    font: 12px "Liberation Sans", sans-serif;
}

.pointers {
    position: absolute;
    inset: 0;
    width: 100%;
    height: 100%;
    fill: #fb3b36;
    pointer-events: none;
}
```
